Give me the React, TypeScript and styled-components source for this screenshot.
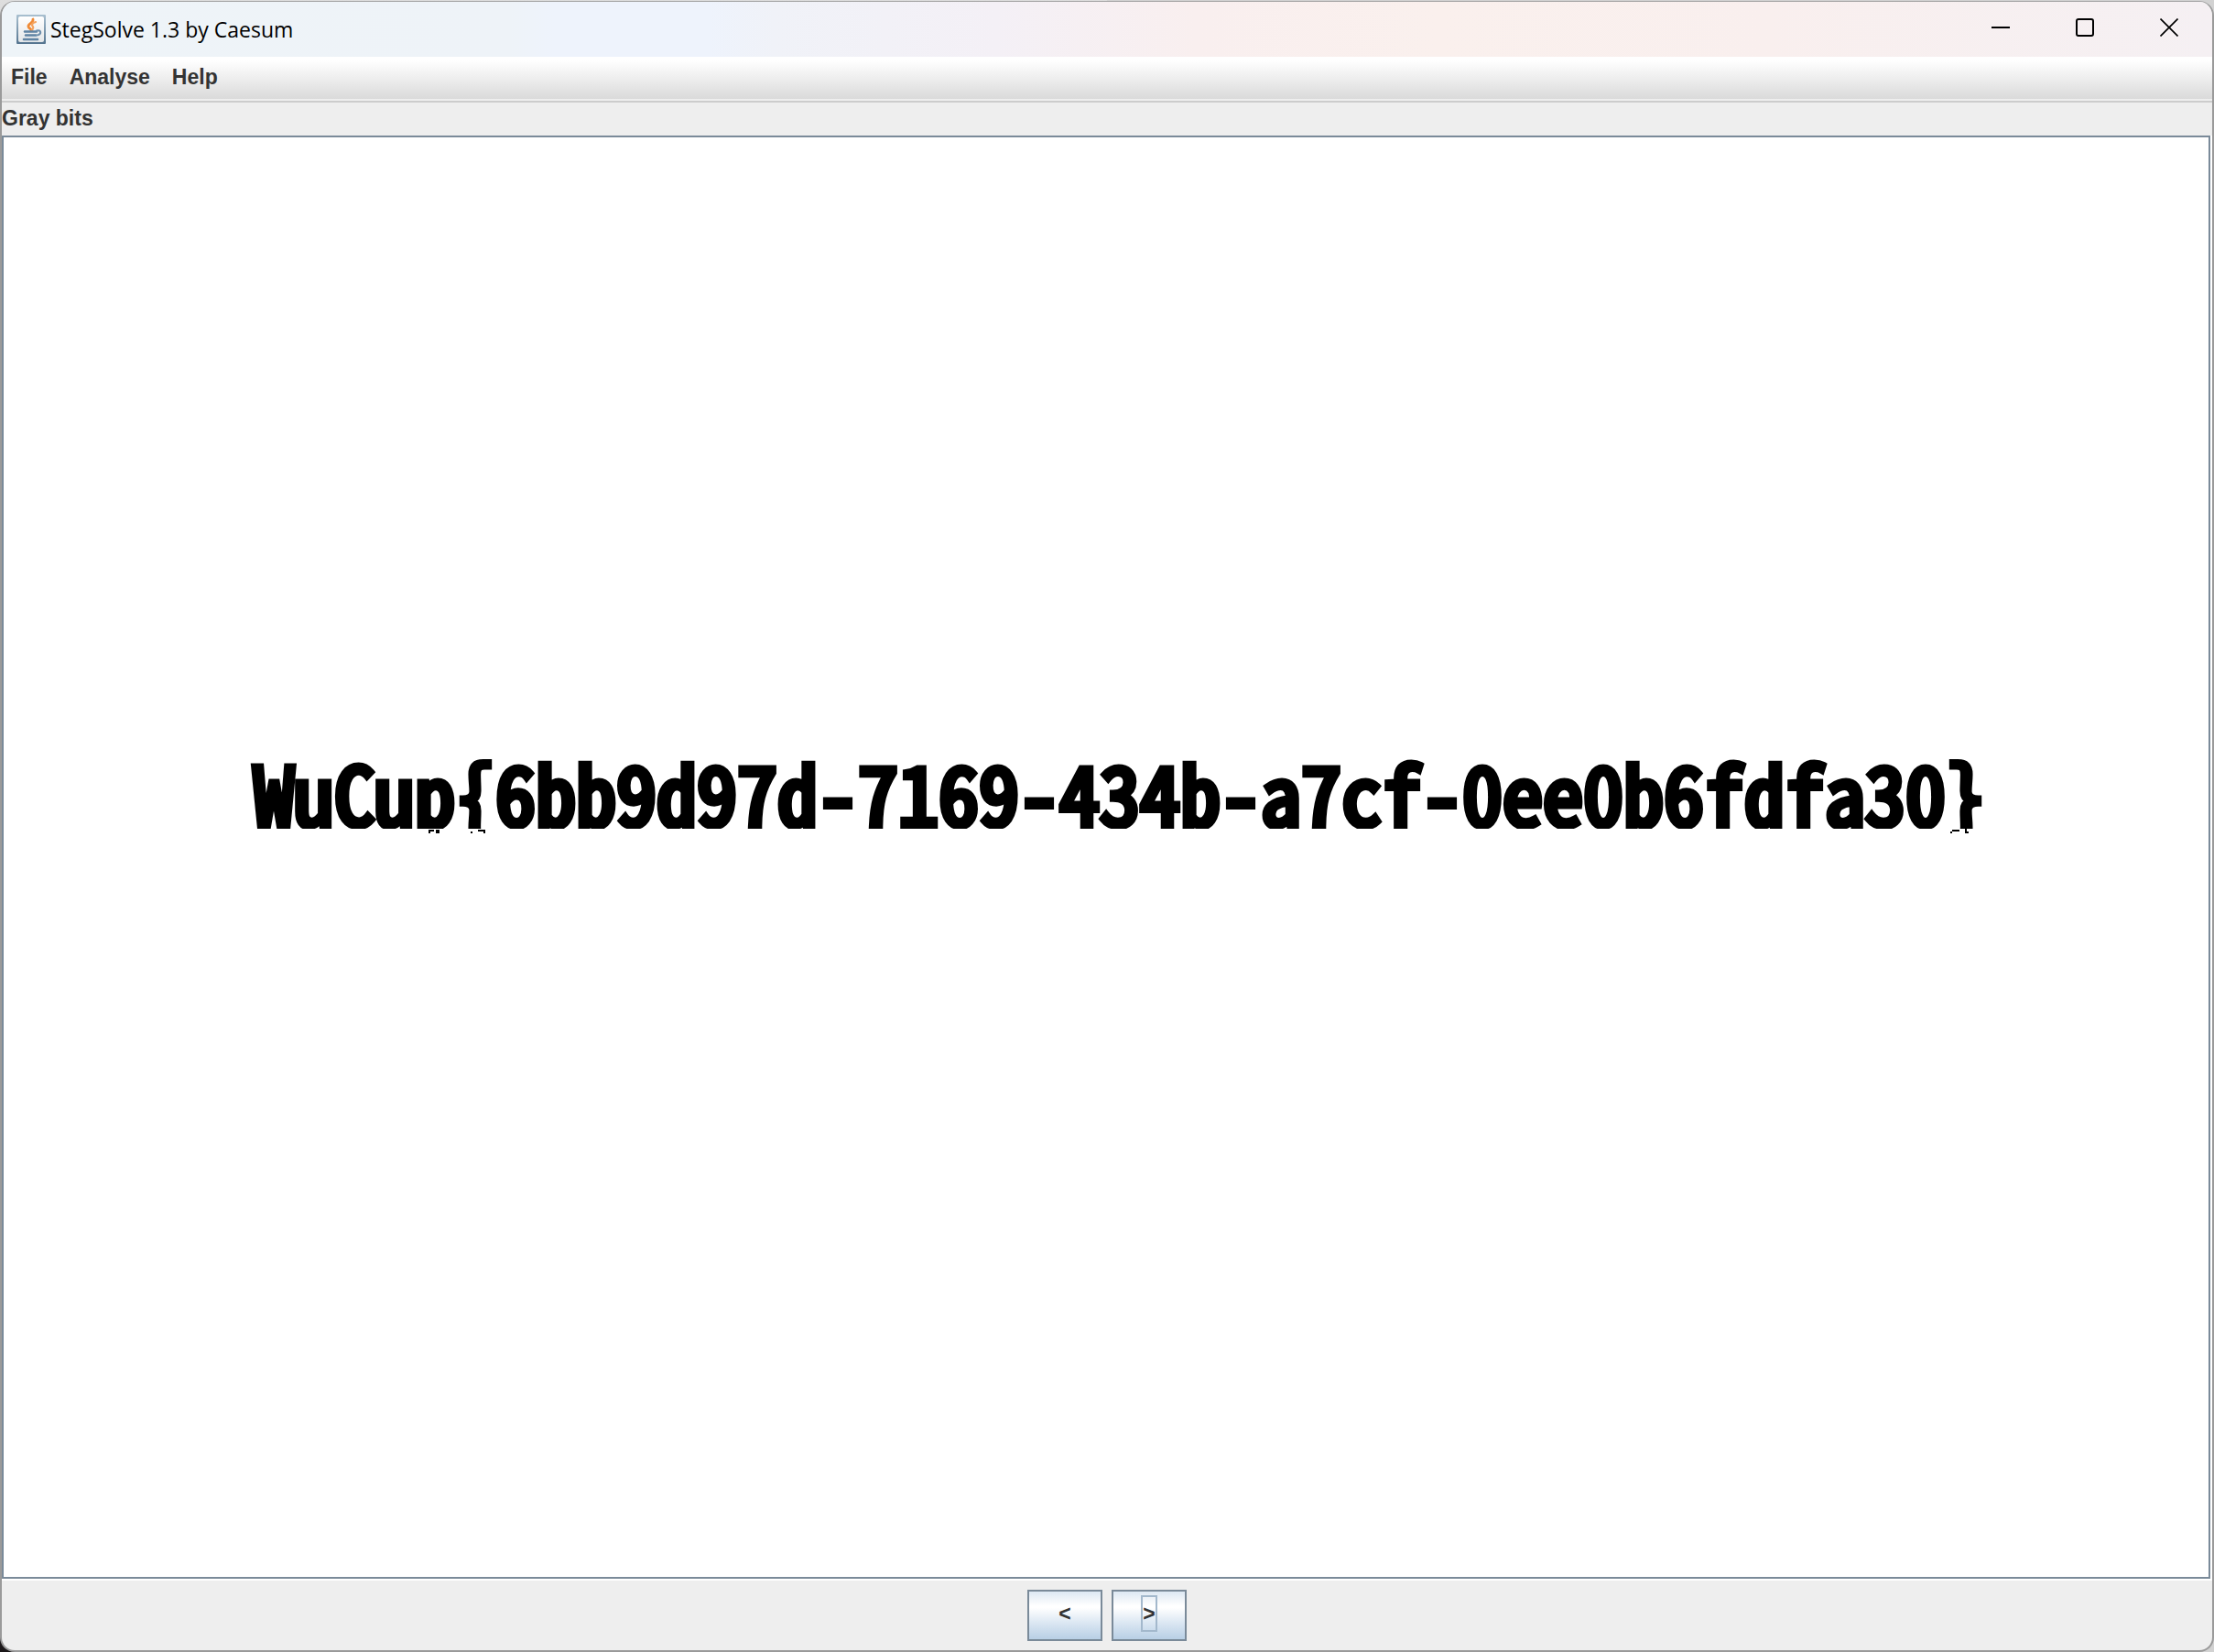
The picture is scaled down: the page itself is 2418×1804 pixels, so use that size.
import React from "react";
import styled, { createGlobalStyle } from "styled-components";

const GlobalStyle = createGlobalStyle`
  *, *::before, *::after { box-sizing: border-box; }
  body {
    margin: 0;
    background: linear-gradient(#dedede 0, #c4c4c4 218px, #8a8a8a 219px, #8a8a8a 90%, #1a1618 100%);
    font-family: "Liberation Sans", Arial, sans-serif;
    color: #333;
  }
`;

const Desktop = styled.div`
  height: 100vh;
  padding-top: 1px;
  background: linear-gradient(90deg, transparent 50%, #d2d2d2 50%);
`;

const Window = styled.div`
  display: flex;
  flex-direction: column;
  height: 100%;
  overflow: hidden;
  border: 2px solid #9a9a9a;
  border-top: 1px solid #a4a4a4;
  border-radius: 16px;
  background: #eee;
`;

const TitleBar = styled.header`
  display: flex;
  align-items: center;
  flex: none;
  height: 60px;
  padding: 0 1px 0 16px;
  background: linear-gradient(
    90deg,
    #eef4f8 0%,
    #eef3f8 23%,
    #eef3fc 25%,
    #eef3fc 32%,
    #f0f2f8 35%,
    #f4f0f6 45%,
    #f9efef 54%,
    #faf0ed 65%,
    #f9efee 80%,
    #f5f0f3 100%
  );
`;

const Title = styled.h1`
  flex: 1;
  margin: 0 0 0 5px;
  font: 400 23px/32px "Open Sans", "Noto Sans", sans-serif;
  color: #000;
`;

const CaptionButton = styled.button`
  display: grid;
  place-items: center;
  width: 92px;
  height: 60px;
  padding: 0 0 4px;
  border: 0;
  background: transparent;
  color: #000;
`;

const MenuBar = styled.nav`
  display: flex;
  align-items: center;
  gap: 24px;
  flex: none;
  height: 50px;
  padding: 0 10px 6px;
  background: linear-gradient(#fff 0, #fff 4px, #dadada 46px, #eee 46px, #eee 48px, #ccc 48px);
`;

const MenuItem = styled.button`
  padding: 0;
  border: 0;
  background: none;
  color: inherit;
  font: 700 23px/32px "Liberation Sans", Arial, sans-serif;
`;

const PlaneLabel = styled.div`
  flex: none;
  height: 36px;
  font: 700 23px/34px "Liberation Sans", Arial, sans-serif;
`;

const ScrollPane = styled.main`
  display: flex;
  flex: 1;
  min-height: 0;
  padding: 0 2px 2px 0;
  background: #fff;
`;

const Canvas = styled.div`
  flex: 1;
  padding: 664px 0 0 273px;
  border: 2px solid #7a8a99;
  background: #fff;
`;

const Flag = styled.div`
  height: 91px;
  color: #000;
  font: 400 88px/100px "Noto Sans Mono CJK SC", "Noto Sans CJK SC", monospace;
  white-space: nowrap;
  -webkit-text-stroke: 7px #000;
  paint-order: stroke fill;
`;

/* The bit plane turns white below the baseline; only stray pixels of the descenders remain. */
const Specks = styled.svg`
  display: block;
  position: relative;
  background: #fff;
`;

const Footer = styled.footer`
  display: flex;
  justify-content: center;
  gap: 10px;
  flex: none;
  padding: 10px 0;
`;

const StepButton = styled.button<{ $focused?: boolean }>`
  display: grid;
  place-items: center;
  width: 82px;
  height: 56px;
  padding: 0 0 4px;
  border: 2px solid #7a8a99;
  background: linear-gradient(#dde8f3 0%, #fff 30%, #fff 34%, #dde8f3 64%, #b8cfe5 100%);
  color: #333;
  font: 700 23px/36px "Liberation Sans", Arial, sans-serif;

  span {
    border: 2px solid ${(p) => (p.$focused ? "#a3b8cc" : "transparent")};
  }
`;

const JavaIcon = () => (
  <svg width="32" height="32" viewBox="0 0 32 32" aria-hidden="true">
    <defs>
      <linearGradient id="frame" x1="0" y1="0" x2="0" y2="1">
        <stop offset="0" stopColor="#a9c0d0" />
        <stop offset="1" stopColor="#54748f" />
      </linearGradient>
      <linearGradient id="plate" x1="0" y1="0" x2="0" y2="1">
        <stop offset="0" stopColor="#fff" />
        <stop offset="1" stopColor="#e3e6e8" />
      </linearGradient>
    </defs>
    <rect width="32" height="32" rx="1" fill="url(#frame)" />
    <rect x="2" y="2" width="28" height="28" rx="2" fill="url(#plate)" />
    <g fill="none" strokeLinecap="round">
      <path d="M18 5c1 4-6 5-5 8 0 2 3 2 3 4" stroke="#f08a35" strokeWidth="2.8" />
      <path d="M21 8c-4 1-5 3-3 5 1 1 0 2-1 4" stroke="#f4a35f" strokeWidth="2.2" />
      <path d="M9 18.500h13M10 22.500h11M8 27h15" stroke="#5f83a3" strokeWidth="2.600" />
      <path d="M22 17.500c5-1.500 6 4 0 5" stroke="#6f90ad" strokeWidth="2.200" />
    </g>
  </svg>
);

export default function App() {
  return (
    <>
      <GlobalStyle />
      <Desktop>
        <Window>
          <TitleBar>
            <JavaIcon />
            <Title>StegSolve 1.3 by Caesum</Title>
            <CaptionButton aria-label="Minimize">
              <svg width="20" height="20" viewBox="0 0 20 20">
                <path d="M0 10h20" stroke="currentColor" strokeWidth="2" />
              </svg>
            </CaptionButton>
            <CaptionButton aria-label="Maximize">
              <svg width="20" height="20" viewBox="0 0 20 20">
                <rect x="1" y="1" width="18" height="18" rx="2" fill="none" stroke="currentColor" strokeWidth="2" />
              </svg>
            </CaptionButton>
            <CaptionButton aria-label="Close">
              <svg width="20" height="20" viewBox="0 0 20 20">
                <path d="M.5.5l19 19M19.500.5l-19 19" stroke="currentColor" strokeWidth="1.700" />
              </svg>
            </CaptionButton>
          </TitleBar>
          <MenuBar>
            <MenuItem>File</MenuItem>
            <MenuItem>Analyse</MenuItem>
            <MenuItem>Help</MenuItem>
          </MenuBar>
          <PlaneLabel>Gray bits</PlaneLabel>
          <ScrollPane>
            <Canvas>
              <Flag>WuCup&#123;6bb9d97d-7169-434b-a7cf-0ee0b6fdfa30&#125;</Flag>
              <Specks width="1900" height="32" viewBox="0 0 1900 32" shapeRendering="crispEdges" aria-hidden="true">
                <path d="M191 1h2v4h-2zM193 1h4v2h-4zM199 1h4v4h-4zM237 3h2v2h-2zM245 1h7v2h-7zM251 1h2v4h-2zM1853 3h2v2h-2zM1855 1h8v2h-8zM1869 0h2v3h2v2h-4z" />
              </Specks>
            </Canvas>
          </ScrollPane>
          <Footer>
            <StepButton aria-label="Previous plane">
              <span>&lt;</span>
            </StepButton>
            <StepButton $focused aria-label="Next plane">
              <span>&gt;</span>
            </StepButton>
          </Footer>
        </Window>
      </Desktop>
    </>
  );
}
